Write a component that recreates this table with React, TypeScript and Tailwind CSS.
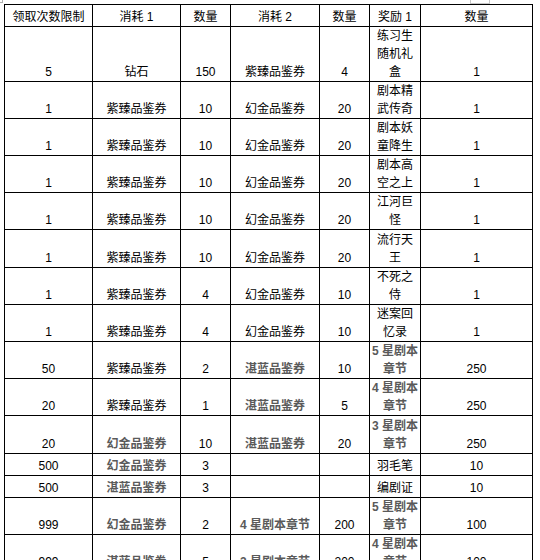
import React from "react";

type Cell = string | { t: string; b: true };
type Row = { h: number; c: Cell[] };

const B = (t: string): Cell => ({ t, b: true });

const rows: Row[] = [
  { h: 55, c: ["5", "钻石", "150", "紫臻品鉴券", "4", "练习生随机礼盒", "1"] },
  { h: 37, c: ["1", "紫臻品鉴券", "10", "幻金品鉴券", "20", "剧本精武传奇", "1"] },
  { h: 37, c: ["1", "紫臻品鉴券", "10", "幻金品鉴券", "20", "剧本妖童降生", "1"] },
  { h: 37, c: ["1", "紫臻品鉴券", "10", "幻金品鉴券", "20", "剧本高空之上", "1"] },
  { h: 37, c: ["1", "紫臻品鉴券", "10", "幻金品鉴券", "20", "江河巨怪", "1"] },
  { h: 38, c: ["1", "紫臻品鉴券", "10", "幻金品鉴券", "20", "流行天王", "1"] },
  { h: 37, c: ["1", "紫臻品鉴券", "4", "幻金品鉴券", "10", "不死之侍", "1"] },
  { h: 37, c: ["1", "紫臻品鉴券", "4", "幻金品鉴券", "10", "迷案回忆录", "1"] },
  { h: 37, c: ["50", "紫臻品鉴券", "2", B("湛蓝品鉴券"), "10", B("5 星剧本章节"), "250"] },
  { h: 37, c: ["20", "紫臻品鉴券", "1", B("湛蓝品鉴券"), "5", B("4 星剧本章节"), "250"] },
  { h: 38, c: ["20", B("幻金品鉴券"), "10", B("湛蓝品鉴券"), "20", B("3 星剧本章节"), "250"] },
  { h: 22, c: ["500", B("幻金品鉴券"), "3", "", "", "羽毛笔", "10"] },
  { h: 22, c: ["500", B("湛蓝品鉴券"), "3", "", "", "编剧证", "10"] },
  { h: 37, c: ["999", B("幻金品鉴券"), "2", B("4 星剧本章节"), "200", B("5 星剧本章节"), "100"] },
  { h: 37, c: ["999", B("湛蓝品鉴券"), "5", B("3 星剧本章节"), "200", B("4 星剧本章节"), "100"] },
];

const headers = ["领取次数限制", "消耗 1", "数量", "消耗 2", "数量", "奖励 1", "数量"];
const widths = [88, 88, 50, 89, 50, 51, 112];

function Content({ cell, col }: { cell: Cell; col: number }) {
  const text = typeof cell === "string" ? cell : cell.t;
  const bold = typeof cell !== "string";
  const cls = bold ? "font-bold text-[#5a5a5a]" : "text-black";
  if (col === 5) {
    return <div className={`mx-auto w-[47px] break-all ${cls}`}>{text}</div>;
  }
  return <span className={cls}>{text}</span>;
}

export default function App() {
  return (
    <div
      className="relative w-[540px] h-[560px] overflow-hidden bg-white"
      style={{ fontFamily: '"Liberation Sans", "Noto Sans CJK SC", sans-serif' }}
    >
      <div className="absolute left-0 top-0 w-[3px] h-[3px] border-r border-b border-[#b0b0b0]" />
      <div className="absolute left-[470px] top-0 w-[20px] h-[4px] border-l border-r border-b border-[#c8c8c8]" />
      <div className="pl-[4px] pt-[4px]">
        <table className="table-fixed border-collapse text-[12px] leading-[18px]" style={{ width: 528 }}>
          <colgroup>
            {widths.map((w, i) => (
              <col key={i} style={{ width: w }} />
            ))}
          </colgroup>
          <tbody>
            <tr>
              {headers.map((h, i) => (
                <td
                  key={i}
                  className="h-[22px] border border-black p-0 text-center align-bottom text-black"
                >
                  {h}
                </td>
              ))}
            </tr>
            {rows.map((r, ri) => (
              <tr key={ri}>
                {r.c.map((c, ci) => (
                  <td
                    key={ci}
                    className="border border-black p-0 text-center align-bottom"
                    style={{ height: r.h }}
                  >
                    <Content cell={c} col={ci} />
                  </td>
                ))}
              </tr>
            ))}
          </tbody>
        </table>
      </div>
    </div>
  );
}
